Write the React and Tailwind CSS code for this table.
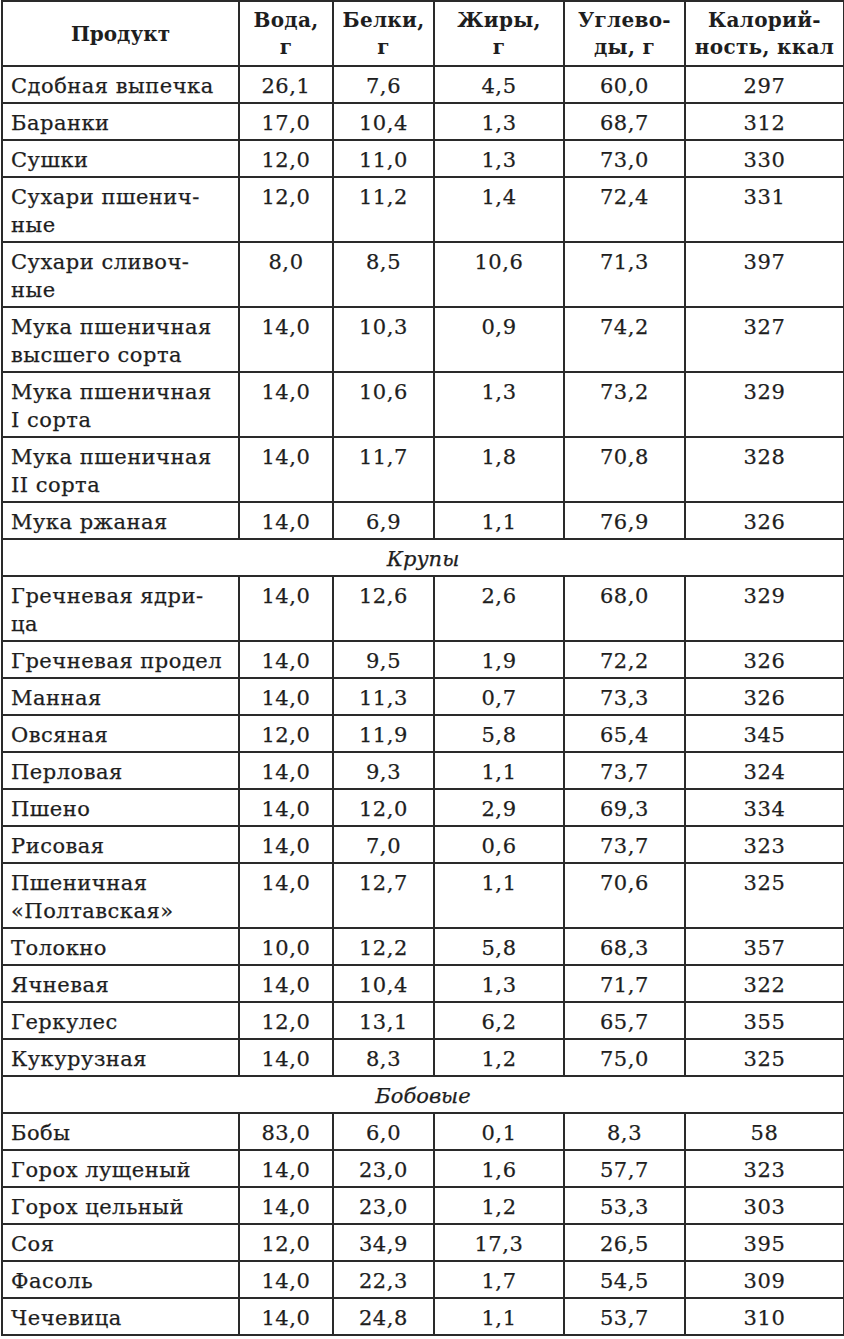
const rows = [
  { name: 'Сдобная выпечка', v: ['26,1', '7,6', '4,5', '60,0', '297'] },
  { name: 'Баранки', v: ['17,0', '10,4', '1,3', '68,7', '312'] },
  { name: 'Сушки', v: ['12,0', '11,0', '1,3', '73,0', '330'] },
  { name: ['Сухари пшенич-', 'ные'], v: ['12,0', '11,2', '1,4', '72,4', '331'] },
  { name: ['Сухари сливоч-', 'ные'], v: ['8,0', '8,5', '10,6', '71,3', '397'] },
  { name: ['Мука пшеничная', 'высшего сорта'], v: ['14,0', '10,3', '0,9', '74,2', '327'] },
  { name: ['Мука пшеничная', 'I сорта'], v: ['14,0', '10,6', '1,3', '73,2', '329'] },
  { name: ['Мука пшеничная', 'II сорта'], v: ['14,0', '11,7', '1,8', '70,8', '328'] },
  { name: 'Мука ржаная', v: ['14,0', '6,9', '1,1', '76,9', '326'] },
  { section: 'Крупы' },
  { name: ['Гречневая ядри-', 'ца'], v: ['14,0', '12,6', '2,6', '68,0', '329'] },
  { name: 'Гречневая продел', v: ['14,0', '9,5', '1,9', '72,2', '326'] },
  { name: 'Манная', v: ['14,0', '11,3', '0,7', '73,3', '326'] },
  { name: 'Овсяная', v: ['12,0', '11,9', '5,8', '65,4', '345'] },
  { name: 'Перловая', v: ['14,0', '9,3', '1,1', '73,7', '324'] },
  { name: 'Пшено', v: ['14,0', '12,0', '2,9', '69,3', '334'] },
  { name: 'Рисовая', v: ['14,0', '7,0', '0,6', '73,7', '323'] },
  { name: ['Пшеничная', '«Полтавская»'], v: ['14,0', '12,7', '1,1', '70,6', '325'] },
  { name: 'Толокно', v: ['10,0', '12,2', '5,8', '68,3', '357'] },
  { name: 'Ячневая', v: ['14,0', '10,4', '1,3', '71,7', '322'] },
  { name: 'Геркулес', v: ['12,0', '13,1', '6,2', '65,7', '355'] },
  { name: 'Кукурузная', v: ['14,0', '8,3', '1,2', '75,0', '325'] },
  { section: 'Бобовые' },
  { name: 'Бобы', v: ['83,0', '6,0', '0,1', '8,3', '58'] },
  { name: 'Горох лущеный', v: ['14,0', '23,0', '1,6', '57,7', '323'] },
  { name: 'Горох цельный', v: ['14,0', '23,0', '1,2', '53,3', '303'] },
  { name: 'Соя', v: ['12,0', '34,9', '17,3', '26,5', '395'] },
  { name: 'Фасоль', v: ['14,0', '22,3', '1,7', '54,5', '309'] },
  { name: 'Чечевица', v: ['14,0', '24,8', '1,1', '53,7', '310'] },
]

const headers = [
  ['Вода,', 'г'],
  ['Белки,', 'г'],
  ['Жиры,', 'г'],
  ['Углево-', 'ды, г'],
  ['Калорий-', 'ность, ккал'],
]

const cell =
  'border-2 border-[#2a2a2a] align-top pt-[5px] leading-[28px] [-webkit-text-stroke:0.25px_#1e1e1e]'

export default function App() {
  return (
    <div className="min-h-screen bg-white font-['DejaVu_Serif',serif] text-[21px] text-[#1e1e1e]">
      <table className="table-fixed border-collapse w-[842px] ml-[1px]">
        <colgroup>
          <col className="w-[237px]" />
          <col className="w-[94px]" />
          <col className="w-[101px]" />
          <col className="w-[130px]" />
          <col className="w-[121px]" />
          <col className="w-[159px]" />
        </colgroup>
        <thead>
          <tr className="h-[65px]">
            <th className="border-2 border-[#2a2a2a] align-middle text-center font-bold text-[20px] leading-[27px] pt-[2px]">
              Продукт
            </th>
            {headers.map((h) => (
              <th
                key={h[0]}
                className="border-2 border-[#2a2a2a] align-middle text-center font-bold text-[20px] leading-[27px] tracking-[0.3px]"
              >
                <span className="block">{h[0]}</span>
                <span className="block">{h[1]}</span>
              </th>
            ))}
          </tr>
        </thead>
        <tbody>
          {rows.map((r, i) => {
            if (r.section) {
              return (
                <tr key={i} className="h-[37px]">
                  <td colSpan={6} className={`${cell} text-center italic`}>
                    {r.section}
                  </td>
                </tr>
              )
            }
            const two = Array.isArray(r.name)
            return (
              <tr key={i} className={two ? 'h-[65px]' : 'h-[37px]'}>
                <td className={`${cell} pl-[8px] pr-1 tracking-[0.5px] whitespace-nowrap`}>
                  {two ? (
                    <>
                      <span className="block">{r.name[0]}</span>
                      <span className="block">{r.name[1]}</span>
                    </>
                  ) : (
                    r.name
                  )}
                </td>
                {r.v.map((x, j) => (
                  <td key={j} className={`${cell} text-center tracking-[0.6px]`}>
                    {x}
                  </td>
                ))}
              </tr>
            )
          })}
        </tbody>
      </table>
    </div>
  )
}
